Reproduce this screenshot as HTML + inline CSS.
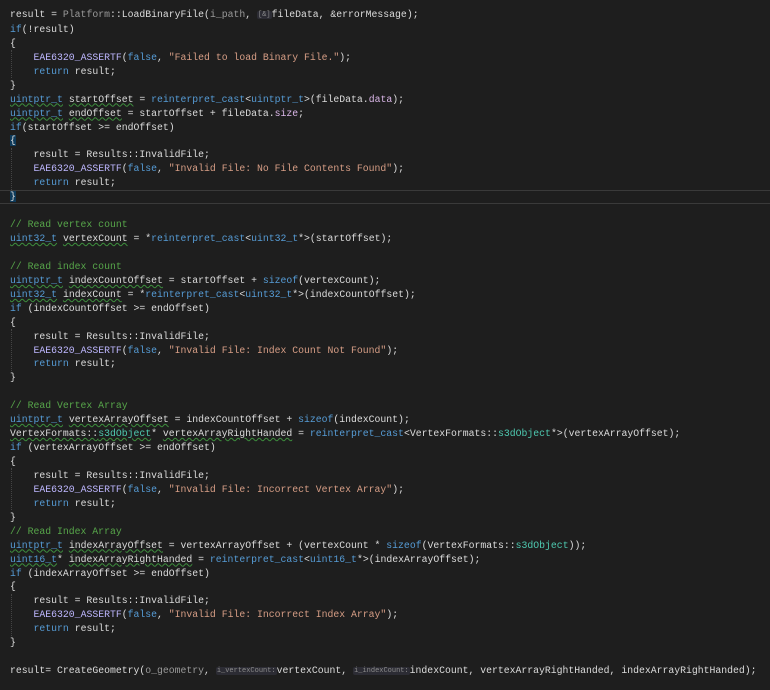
<!DOCTYPE html>
<html><head><meta charset="utf-8"><style>
body{margin:0;background:#1e1e1e;width:770px;height:690px;overflow:hidden}
pre{margin:0;position:absolute;left:10px;top:8px;font-family:"Liberation Mono",monospace;font-size:9.8px;line-height:13.94px;color:#dcdcdc;white-space:pre}
.k{color:#569cd6}.m{color:#beb7ff}.s{color:#d69d85}.c{color:#57a64a}.p{color:#9a9a9a}.f{color:#dcdcdc}.t{color:#4ec9b0}.mb{color:#dab6e8}
.h{font-size:7px;color:#8c8c8c;background:#2c2c34;border-radius:2px;padding:0 1px;vertical-align:1px}
.sq{text-decoration:underline wavy #3d8f3d;text-decoration-thickness:1px}
.cur{position:absolute;left:0;top:190px;width:770px;height:12px;border-top:1px solid #3a3a3a;border-bottom:1px solid #3a3a3a}
.g{position:absolute;left:11px;border-left:1px dotted #444;width:0}
</style></head><body>
<div class="cur"></div>
<div class="g" style="top:50px;height:28px"></div>
<div class="g" style="top:148px;height:42px"></div>
<div class="g" style="top:329px;height:42px"></div>
<div class="g" style="top:468px;height:42px"></div>
<div class="g" style="top:594px;height:42px"></div>
<pre>result = <span class="p">Platform</span>::<span class="f">LoadBinaryFile</span>(<span class="p">i_path</span>, <span class="h">[&amp;]</span>fileData, &amp;errorMessage);
<span class="k">if</span>(!result)
{
    <span class="m">EAE6320_ASSERTF</span>(<span class="k">false</span>, <span class="s">"Failed to load Binary File."</span>);
    <span class="k">return</span> result;
}
<span class="k sq">uintptr_t</span> <span class="sq">startOffset</span> = <span class="k">reinterpret_cast</span>&lt;<span class="k">uintptr_t</span>&gt;(fileData.<span class="mb">data</span>);
<span class="k sq">uintptr_t</span> <span class="sq">endOffset</span> = startOffset + fileData.<span class="mb">size</span>;
<span class="k">if</span>(startOffset &gt;= endOffset)
<span style="background:#0e3a5a">{</span>
    result = Results::InvalidFile;
    <span class="m">EAE6320_ASSERTF</span>(<span class="k">false</span>, <span class="s">"Invalid File: No File Contents Found"</span>);
    <span class="k">return</span> result;
<span style="background:#0e3a5a">}</span>

<span class="c">// Read vertex count</span>
<span class="k sq">uint32_t</span> <span class="sq">vertexCount</span> = *<span class="k">reinterpret_cast</span>&lt;<span class="k">uint32_t</span>*&gt;(startOffset);

<span class="c">// Read index count</span>
<span class="k sq">uintptr_t</span> <span class="sq">indexCountOffset</span> = startOffset + <span class="k">sizeof</span>(vertexCount);
<span class="k sq">uint32_t</span> <span class="sq">indexCount</span> = *<span class="k">reinterpret_cast</span>&lt;<span class="k">uint32_t</span>*&gt;(indexCountOffset);
<span class="k">if</span> (indexCountOffset &gt;= endOffset)
{
    result = Results::InvalidFile;
    <span class="m">EAE6320_ASSERTF</span>(<span class="k">false</span>, <span class="s">"Invalid File: Index Count Not Found"</span>);
    <span class="k">return</span> result;
}

<span class="c">// Read Vertex Array</span>
<span class="k sq">uintptr_t</span> <span class="sq">vertexArrayOffset</span> = indexCountOffset + <span class="k">sizeof</span>(indexCount);
<span class="sq">VertexFormats::<span class="t">s3dObject</span></span>* <span class="sq">vertexArrayRightHanded</span> = <span class="k">reinterpret_cast</span>&lt;VertexFormats::<span class="t">s3dObject</span>*&gt;(vertexArrayOffset);
<span class="k">if</span> (vertexArrayOffset &gt;= endOffset)
{
    result = Results::InvalidFile;
    <span class="m">EAE6320_ASSERTF</span>(<span class="k">false</span>, <span class="s">"Invalid File: Incorrect Vertex Array"</span>);
    <span class="k">return</span> result;
}
<span class="c">// Read Index Array</span>
<span class="k sq">uintptr_t</span> <span class="sq">indexArrayOffset</span> = vertexArrayOffset + (vertexCount * <span class="k">sizeof</span>(VertexFormats::<span class="t">s3dObject</span>));
<span class="k sq">uint16_t</span>* <span class="sq">indexArrayRightHanded</span> = <span class="k">reinterpret_cast</span>&lt;<span class="k">uint16_t</span>*&gt;(indexArrayOffset);
<span class="k">if</span> (indexArrayOffset &gt;= endOffset)
{
    result = Results::InvalidFile;
    <span class="m">EAE6320_ASSERTF</span>(<span class="k">false</span>, <span class="s">"Invalid File: Incorrect Index Array"</span>);
    <span class="k">return</span> result;
}

result= <span class="f">CreateGeometry</span>(<span class="p">o_geometry</span>, <span class="h">i_vertexCount:</span>vertexCount, <span class="h">i_indexCount:</span>indexCount, vertexArrayRightHanded, indexArrayRightHanded);</pre>
</body></html>
